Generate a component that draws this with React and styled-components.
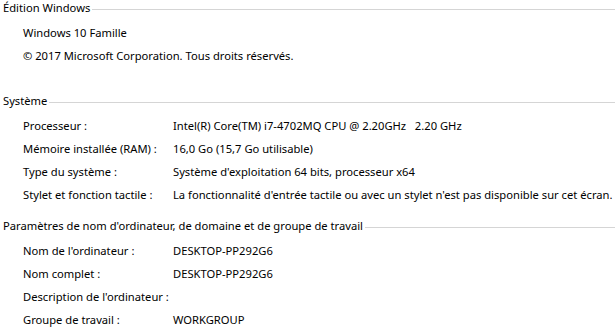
import styled, { createGlobalStyle } from "styled-components";

const GlobalStyle = createGlobalStyle`
    html, body {
        margin: 0;
        padding: 0;
        background: #ffffff;
    }
    body {
        font-family: "Noto Sans", "Open Sans", sans-serif;
        font-size: 11.2px;
        color: #000000;
        -webkit-font-smoothing: antialiased;
    }
`

const sections = [
    {
        title: "Édition Windows",
        gapAfter: 26,
        rows: [
            { value: "Windows 10 Famille" },
            { value: "© 2017 Microsoft Corporation. Tous droits réservés." },
        ],
    },
    {
        title: "Système",
        gapAfter: 12,
        rows: [
            { label: "Processeur :", value: "Intel(R) Core(TM) i7-4702MQ CPU @ 2.20GHz   2.20 GHz" },
            { label: "Mémoire installée (RAM) :", value: "16,0 Go (15,7 Go utilisable)" },
            { label: "Type du système :", value: "Système d'exploitation 64 bits, processeur x64" },
            { label: "Stylet et fonction tactile :", value: "La fonctionnalité d'entrée tactile ou avec un stylet n'est pas disponible sur cet écran." },
        ],
    },
    {
        title: "Paramètres de nom d'ordinateur, de domaine et de groupe de travail",
        gapAfter: 0,
        rows: [
            { label: "Nom de l'ordinateur :", value: "DESKTOP-PP292G6" },
            { label: "Nom complet :", value: "DESKTOP-PP292G6" },
            { label: "Description de l'ordinateur :", value: "" },
            { label: "Groupe de travail :", value: "WORKGROUP" },
        ],
    },
]

export default function App() {
    return (
        <>
            <GlobalStyle />
            <Page>
                {sections.map((section, index) => (
                    <Section key={index} $gapAfter={section.gapAfter}>
                        <Header>
                            <Title>{section.title}</Title>
                            <Rule />
                        </Header>
                        <Rows>
                            {section.rows.map((row, i) => (
                                row.label === undefined
                                    ? <Row key={i}><Single>{row.value}</Single></Row>
                                    : <Row key={i}>
                                        <Label>{row.label}</Label>
                                        <Value>{row.value}</Value>
                                    </Row>
                            ))}
                        </Rows>
                    </Section>
                ))}
            </Page>
        </>
    )
}

//Styles

const Page = styled.main`
    width: 615px;
    height: 336px;
    overflow: hidden;
    display: flex;
    flex-direction: column;
`

const Section = styled.section`
    display: flex;
    flex-direction: column;
    margin-bottom: ${props => props.$gapAfter}px;
`

const Header = styled.div`
    display: flex;
    align-items: center;
    height: 16px;
    padding-left: 3px;
    gap: 2px;
`

const Title = styled.span`
    white-space: nowrap;
    line-height: 16px;
`

const Rule = styled.div`
    flex: 1;
    height: 1px;
    margin-top: 3px;
    background: #d5d5d5;
`

const Rows = styled.div`
    display: flex;
    flex-direction: column;
    margin-top: 5px;
    padding-left: 23px;
`

const Row = styled.div`
    display: grid;
    grid-template-columns: 150px 1fr;
    height: 23px;
    line-height: 23px;
    white-space: pre;
`

const Label = styled.span``

const Value = styled.span``

const Single = styled.span`
    grid-column: 1 / 3;
`
